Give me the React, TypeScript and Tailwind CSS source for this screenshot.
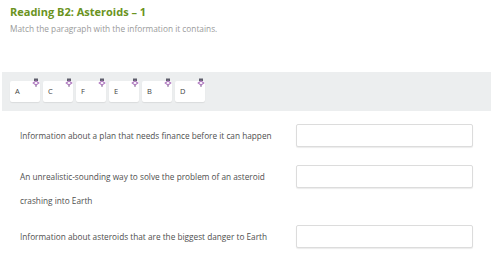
import React from "react";

const tiles = ["A", "C", "F", "E", "B", "D"];

const rows = [
  { text: "Information about a plan that needs finance before it can happen", mt: "mt-[13px]" },
  { text: "An unrealistic-sounding way to solve the problem of an asteroid crashing into Earth", mt: "mt-[17px]" },
  { text: "Information about asteroids that are the biggest danger to Earth", mt: "mt-[12px]" },
];

function Pin() {
  return (
    <svg width="8" height="9" viewBox="0 0 8 9" className="absolute -top-[3px] right-[0px]">
      <rect x="2" y="0.5" width="4" height="2.5" fill="#5e5e6c" />
      <path d="M4 3 L6.8 5 L4 7 L1.2 5 Z" fill="none" stroke="#b07ac0" strokeWidth="1.1" />
      <line x1="4" y1="7" x2="4" y2="9" stroke="#8a6a99" strokeWidth="1" />
    </svg>
  );
}

export default function App() {
  return (
    <div
      className="w-[500px] h-[255px] bg-white overflow-hidden"
      style={{ fontFamily: '"Open Sans", sans-serif' }}
    >
      <div className="w-[489px] ml-[2px]">
        <div className="pl-[8px] pt-[4px]">
          <h1 className="text-[11px] font-bold text-[#6a9321] leading-[16px]">
            Reading B2: Asteroids – 1
          </h1>
          <p className="text-[8.3px] text-[#9a9a9a] leading-[12px] mt-[3px]">
            Match the paragraph with the information it contains.
          </p>
        </div>

        <div className="mt-[37px] h-[39px] bg-[#eceeef] flex items-start gap-[3px] pl-[8px] pt-[9px]">
          {tiles.map((t) => (
            <div
              key={t}
              className="relative w-[30px] h-[21px] bg-white rounded-[2px] shadow-[0_1px_1px_rgba(0,0,0,0.08)] flex items-center pl-[5px]"
            >
              <span className="text-[7.5px] text-[#444] leading-none mt-[1px]">{t}</span>
              <Pin />
            </div>
          ))}
        </div>

        {rows.map((r) => (
          <div key={r.text} className={`flex items-start ${r.mt}`}>
            <div className="ml-[18px] w-[258px] text-[8.25px] leading-[24px] text-[#4f4f4f]">
              {r.text}
            </div>
            <div className="ml-[18px] w-[177px] h-[23px] border border-[#dcdcdc] rounded-[2px] shadow-[0_1px_1px_rgba(0,0,0,0.08)] bg-white" />
          </div>
        ))}
      </div>
    </div>
  );
}
